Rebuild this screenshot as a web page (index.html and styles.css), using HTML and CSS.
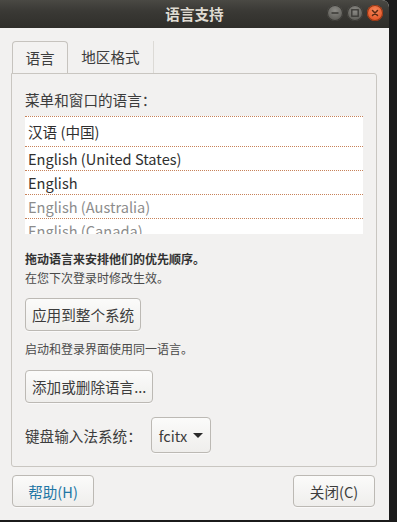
FILE: index.html
```html
<!DOCTYPE html>
<html lang="zh-CN">
<head>
<meta charset="utf-8">
<title>语言支持</title>
<link rel="stylesheet" href="styles.css">
</head>
<body>
<div class="window">
  <div class="titlebar">
    <div class="title">语言支持</div>
    <div class="wm-buttons">
      <span class="wm wm-min"><svg viewBox="0 0 16 16" width="16" height="16"><line x1="4.5" y1="8" x2="11.5" y2="8" stroke="#3a3935" stroke-width="1.6"/></svg></span>
      <span class="wm wm-max"><svg viewBox="0 0 16 16" width="16" height="16"><rect x="4.8" y="4.8" width="6.4" height="6.4" fill="none" stroke="#3a3935" stroke-width="1.3"/></svg></span>
      <span class="wm wm-close"><svg viewBox="0 0 16 16" width="16" height="16"><path d="M5.5 5.5 L10.5 10.5 M10.5 5.5 L5.5 10.5" stroke="#5a2a14" stroke-width="1.5" stroke-linecap="round"/></svg></span>
    </div>
  </div>
  <div class="content">
    <div class="tabs">
      <div class="tab tab-active">语言</div>
      <div class="tab">地区格式</div>
    </div>
    <div class="frame">
      <div class="section-label">菜单和窗口的语言：</div>
      <div class="lang-list">
        <div class="lang-row lang-first">汉语 (中国)</div>
        <div class="lang-row">English (United States)</div>
        <div class="lang-row">English</div>
        <div class="lang-row lang-dim">English (Australia)</div>
        <div class="lang-row lang-dim">English (Canada)</div>
      </div>
      <div class="note note-bold">拖动语言来安排他们的优先顺序。</div>
      <div class="note">在您下次登录时修改生效。</div>
      <button class="btn btn-apply">应用到整个系统</button>
      <div class="note note-gap">启动和登录界面使用同一语言。</div>
      <button class="btn btn-add">添加或删除语言...</button>
      <div class="kbd-row">
        <span class="kbd-label">键盘输入法系统：</span>
        <button class="btn combo">fcitx <span class="caret"></span></button>
      </div>
    </div>
    <div class="actions">
      <button class="btn btn-bottom btn-help">帮助(H)</button>
      <button class="btn btn-bottom">关闭(C)</button>
    </div>
  </div>
</div>
</body>
</html>
```

FILE: styles.css
```css
* { box-sizing: border-box; }
html, body {
  margin: 0;
  padding: 0;
  background: #1b1b1b;
  width: 397px;
  height: 522px;
  overflow: hidden;
}
body {
  font-family: "Noto Sans CJK SC", "Noto Sans", sans-serif;
  color: #3c3c3c;
}
.window {
  width: 389px;
  height: 520px;
  background: #f2f1f0;
  border-top-right-radius: 7px;
  overflow: hidden;
  display: flex;
  flex-direction: column;
}
.titlebar {
  height: 28px;
  flex: none;
  background: linear-gradient(#4a4944, #3a3935 40%, #2f2e2a);
  position: relative;
  display: flex;
  align-items: center;
  justify-content: center;
}
.title {
  color: #dfdbd2;
  font-size: 14.6px;
  font-weight: bold;
  line-height: 28px;
}
.wm-buttons {
  position: absolute;
  right: 6px;
  top: 5px;
  display: flex;
  gap: 4px;
}
.wm {
  width: 16px;
  height: 16px;
  border-radius: 50%;
  display: block;
}
.wm svg { display: block; }
.wm-min, .wm-max {
  background: radial-gradient(circle at 50% 35%, #8c8b86, #5f5e59 70%, #4a4945);
  box-shadow: inset 0 0 0 1px #3a3935;
}
.wm-close {
  background: radial-gradient(circle at 50% 35%, #f6875a, #e5582a 70%, #c9441a);
  box-shadow: inset 0 0 0 1px #8f3615;
}
.content {
  flex: 1;
  display: flex;
  flex-direction: column;
  padding: 13px 12px 0 11px;
}
.tabs {
  display: flex;
  height: 32px;
  padding-left: 1px;
}
.tab {
  font-size: 14.6px;
  line-height: 32px;
  padding: 0 13px;
  color: #3c3c3c;
  white-space: nowrap;
  border-right: 1px solid #dcdad6;
}
.tab-active {
  padding: 0 12.5px;
  border: 1px solid #c6c3be;
  border-bottom: none;
  border-radius: 4px 4px 0 0;
  background: #f3f2f1;
  line-height: 31px;
  position: relative;
  top: 1px;
  margin-top: -1px;
  height: 32px;
}
.frame {
  border: 1px solid #c9c6c1;
  border-radius: 0 3px 3px 3px;
  padding: 15px 13px 0 13px;
  height: 394px;
}
.section-label {
  font-size: 14.6px;
  line-height: 21px;
  height: 21px;
  white-space: nowrap;
}
.lang-list {
  margin-top: 6px;
  height: 118px;
  overflow: hidden;
  background: #ffffff;
}
.lang-row {
  height: 24px;
  border-top: 1px dotted #c7825a;
  font-size: 14.6px;
  line-height: 23px;
  padding-left: 3px;
  color: #2f2f2f;
  white-space: nowrap;
}
.lang-first {
  height: 30px;
  line-height: 29px;
}
.lang-dim { color: #8c8c8c; }
.note {
  font-size: 12px;
  line-height: 19px;
  color: #4a4a4a;
  white-space: nowrap;
}
.note-bold {
  margin-top: 15px;
  font-weight: bold;
  color: #333;
}
.note-gap { margin-top: 8px; }
.btn {
  font-family: "Noto Sans CJK SC", "Noto Sans", sans-serif;
  font-size: 14.6px;
  color: #3c3c3c;
  background: linear-gradient(#fbfbfa, #efeeec);
  border: 1px solid #bcb9b4;
  border-radius: 4px;
  box-shadow: 0 1px 0 rgba(255,255,255,0.6);
  padding: 0 6px;
  height: 33px;
  display: block;
  white-space: nowrap;
  cursor: default;
}
.btn-apply { margin-top: 11px; }
.btn-add { margin-top: 12px; }
.kbd-row {
  margin-top: 14px;
  display: flex;
  align-items: center;
  gap: 9px;
}
.kbd-label {
  font-size: 14.6px;
  line-height: 20px;
  margin-top: 2px;
  white-space: nowrap;
}
.combo {
  height: 36px;
  display: flex;
  align-items: center;
  gap: 6px;
  padding: 0 7px;
}
.caret {
  width: 0;
  height: 0;
  border-left: 5px solid transparent;
  border-right: 5px solid transparent;
  border-top: 5px solid #2a2a2a;
  margin-top: 1px;
}
.actions {
  display: flex;
  justify-content: space-between;
  margin-top: 8px;
  padding-left: 1px;
  margin-right: 2px;
}
.btn-bottom {
  width: 82px;
  height: 32px;
  text-align: center;
}
.btn-help { color: #1f76a5; }
```
